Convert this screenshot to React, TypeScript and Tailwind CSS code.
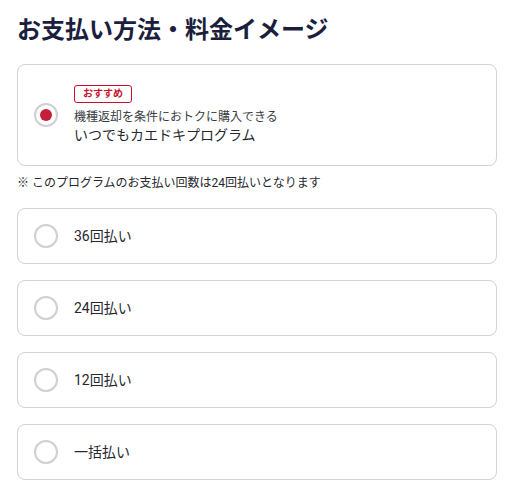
import { useState } from "react"

const options = ["36回払い", "24回払い", "12回払い", "一括払い"]

function Radio({ checked }: { checked: boolean }) {
  return (
    <span className="flex h-6 w-6 shrink-0 items-center justify-center rounded-full border-2 border-[#cfcfd4] bg-white">
      {checked && <span className="h-3 w-3 rounded-full bg-[#c41e3a]" />}
    </span>
  )
}

export default function App() {
  const [selected, setSelected] = useState("program")

  return (
    <div
      className="min-h-screen w-[516px] bg-white text-[#26282e]"
      style={{ fontFamily: 'Roboto, "Noto Sans CJK JP", "Noto Sans", sans-serif' }}
    >
      <div className="ml-[17px] w-[480px] pt-3">
        <h1 className="mb-4 text-[24px] font-bold leading-9 text-[#1b1e3c]">
          お支払い方法・料金イメージ
        </h1>

        <button
          onClick={() => setSelected("program")}
          className="flex w-full items-center gap-4 rounded-lg border border-[#d2d2d7] bg-white pt-5 pb-[21px] pl-4 text-left"
        >
          <Radio checked={selected === "program"} />
          <div className="flex flex-col">
            <span className="flex h-[18px] w-[58px] items-center justify-center rounded-[3px] border border-[#c8102e] text-[10px] font-bold leading-none text-[#c8102e]">
              おすすめ
            </span>
            <span className="mt-[5px] text-[12px] leading-[18px] text-[#3a3c44]">
              機種返却を条件におトクに購入できる
            </span>
            <span className="text-[14px] leading-[18px] text-[#26282e]">
              いつでもカエドキプログラム
            </span>
          </div>
        </button>

        <p className="mt-2 text-[12px] leading-[18px] text-[#26282e]">
          ※ このプログラムのお支払い回数は24回払いとなります
        </p>

        <div className="mt-4 flex flex-col gap-4">
          {options.map((o) => (
            <button
              key={o}
              onClick={() => setSelected(o)}
              className="flex h-14 w-full items-center gap-4 rounded-lg border border-[#d2d2d7] bg-white pl-4 text-left"
            >
              <Radio checked={selected === o} />
              <span className="text-[14px] leading-5 text-[#26282e]">{o}</span>
            </button>
          ))}
        </div>
      </div>
    </div>
  )
}
